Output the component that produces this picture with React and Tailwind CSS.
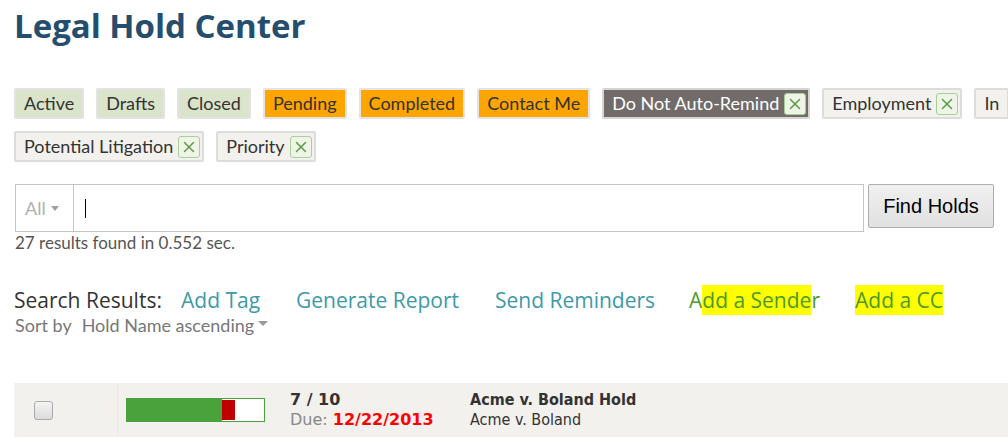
import { X } from "lucide-react";

const statusTags = [
  { label: "Active", cls: "bg-[#d9e4cb] border-[#e3e3e3] text-[#333]" },
  { label: "Drafts", cls: "bg-[#d9e4cb] border-[#e3e3e3] text-[#333]" },
  { label: "Closed", cls: "bg-[#d9e4cb] border-[#e3e3e3] text-[#333]" },
  { label: "Pending", cls: "bg-[#ffa500] border-[#e3e3e3] text-[#333]" },
  { label: "Completed", cls: "bg-[#ffa500] border-[#e3e3e3] text-[#333]" },
  { label: "Contact Me", cls: "bg-[#ffa500] border-[#e3e3e3] text-[#333]" },
];

function RemoveBox() {
  return (
    <span className="ml-[5px] inline-flex h-[22px] w-[22px] items-center justify-center rounded-[3px] border border-[#a9cf98] bg-[#eef5e8] text-[#5e9a45]">
      <X size={18} strokeWidth={2} />
    </span>
  );
}

function Tag({ label, cls, removable }) {
  return (
    <div
      className={`flex h-[31px] shrink-0 items-center rounded-[2px] border-2 pl-[8px] text-[18px] ${removable ? "pr-[2px]" : "pr-[8px]"} ${cls}`}
    >
      {label}
      {removable && <RemoveBox />}
    </div>
  );
}

export default function App() {
  return (
    <div className="h-[439px] w-[1008px] overflow-hidden bg-white font-['Lato',sans-serif]">
      <div className="pl-[14px] pt-[4px]">
        <h1 className="font-['Open_Sans',sans-serif] text-[33px] font-bold leading-[44px] text-[#254e6e]">
          Legal Hold Center
        </h1>
      </div>

      {/* filtros */}
      <div className="mt-[40px] flex flex-col gap-[12px] pl-[14px]">
        <div className="flex gap-[12px] whitespace-nowrap">
          {statusTags.map((t) => (
            <Tag key={t.label} {...t} />
          ))}
          <Tag
            label="Do Not Auto-Remind"
            cls="bg-[#716b6a] border-[#d5d5d5] text-white"
            removable
          />
          <Tag label="Employment" cls="bg-[#f2f1ed] border-[#dcdcdc] text-[#333]" removable />
          <Tag label="In" cls="bg-[#f2f1ed] border-[#dcdcdc] text-[#333]" />
        </div>
        <div className="flex gap-[12px] whitespace-nowrap">
          <Tag
            label="Potential Litigation"
            cls="bg-[#f2f1ed] border-[#dcdcdc] text-[#333]"
            removable
          />
          <Tag label="Priority" cls="bg-[#f2f1ed] border-[#dcdcdc] text-[#333]" removable />
        </div>
      </div>

      {/* búsqueda */}
      <div className="mt-[22px] flex items-start pl-[15px]">
        <div className="flex h-[48px] w-[849px] border border-[#c4c4c4]">
          <div className="flex w-[58px] items-center gap-[5px] border-r border-[#c4c4c4] pl-[9px] text-[18px] text-[#b0b0b0]">
            All
            <span className="mt-[1px] border-x-[4px] border-t-[5px] border-x-transparent border-t-[#a0a0a0]" />
          </div>
          <div className="flex flex-1 items-center pl-[11px]">
            <span className="h-[19px] w-[1px] bg-black" />
          </div>
        </div>
        <button className="ml-[4px] h-[44px] w-[126px] rounded-[2px] border border-[#adadad] bg-gradient-to-b from-[#f0f0f0] to-[#e1e1e1] font-['Liberation_Sans',sans-serif] text-[20px] text-black">
          Find Holds
        </button>
      </div>
      <p className="pl-[15px] text-[17px] leading-[22px] text-[#555]">
        27 results found in 0.552 sec.
      </p>

      {/* acciones */}
      <div className="mt-[31px] flex items-center whitespace-nowrap pl-[14px] font-['Open_Sans',sans-serif] text-[21px] leading-[28px]">
        <span className="w-[167px] text-[#333]">Search Results:</span>
        <span className="w-[115px] text-[#3e9aa8]">Add Tag</span>
        <span className="w-[199px] text-[#3e9aa8]">Generate Report</span>
        <span className="w-[194px] text-[#3e9aa8]">Send Reminders</span>
        <span className="w-[166px] text-[#4c9a2a]">
          A<span className="bg-[#ffff00] py-[1px]">dd a Sende</span>r
        </span>
        <span className="bg-[#ffff00] py-[1px] text-[#4c9a2a]">Add a CC</span>
      </div>
      <div className="flex items-center pl-[15px] text-[18px] leading-[20px] text-[#777]">
        <span className="mr-[10px]">Sort by</span>
        <span>Hold Name ascending</span>
        <span className="ml-[4px] mb-[3px] border-x-[5px] border-t-[5px] border-x-transparent border-t-[#999]" />
      </div>

      {/* fila */}
      <div className="mt-[48px] ml-[14px] flex h-[54px] items-center bg-[#f2f1ed]">
        <div className="flex h-full w-[104px] items-center border-r border-[#ebeae5] pl-[20px]">
          <span className="h-[19px] w-[19px] rounded-[3px] border border-[#aaa] bg-gradient-to-b from-[#f4f4f4] to-[#dcdcdc]" />
        </div>
        <div className="ml-[8px] flex h-[24px] w-[139px] border border-[#4aa23c] bg-white">
          <div className="h-full w-[95px] bg-[#4aa23c]" />
          <div className="my-[1px] w-[13px] bg-[#c00000]" />
        </div>
        <div className="ml-[25px] w-[180px] font-['DejaVu_Sans',sans-serif] leading-[20px]">
          <div className="text-[16px] font-bold text-[#333]">7 / 10</div>
          <div className="text-[16px] text-[#888]">
            Due: <span className="font-bold text-[#ff0000]">12/22/2013</span>
          </div>
        </div>
        <div className="font-['DejaVu_Sans_Condensed','DejaVu_Sans',sans-serif] text-[16px] leading-[20px] text-[#333]">
          <div className="font-bold">Acme v. Boland Hold</div>
          <div>Acme v. Boland</div>
        </div>
      </div>
    </div>
  );
}
